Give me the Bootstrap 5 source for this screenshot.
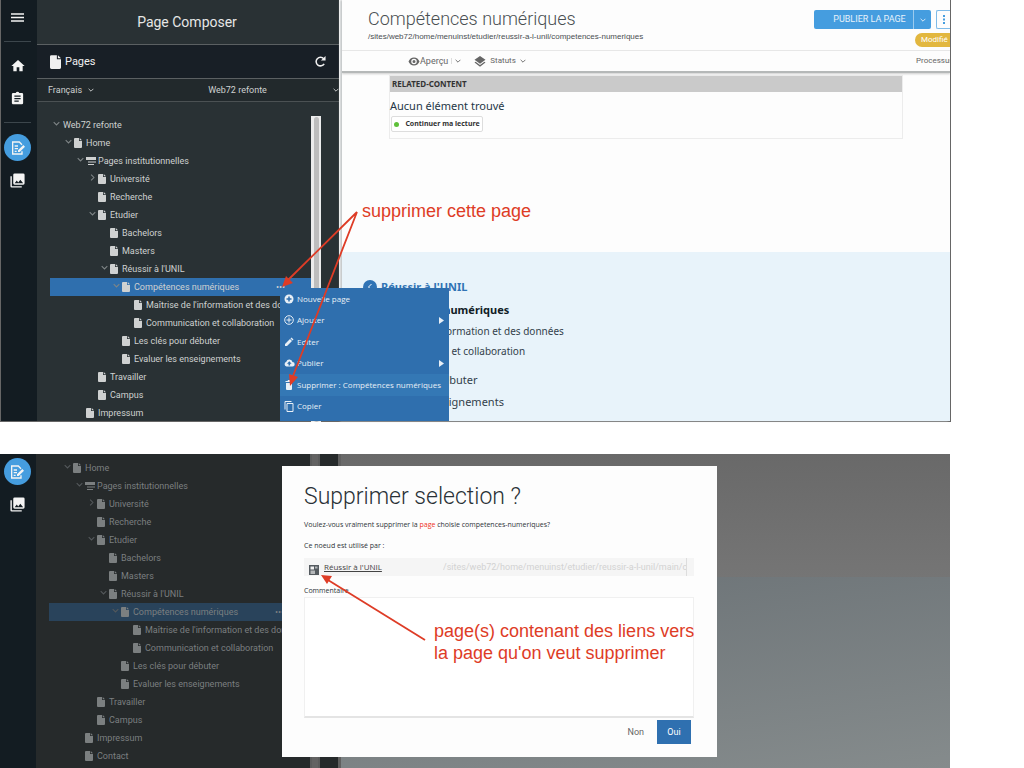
<!DOCTYPE html>
<html lang="fr">
<head>
<meta charset="utf-8">
<meta name="viewport" content="width=device-width, initial-scale=1">
<title>Page Composer</title>
<link href="https://cdn.jsdelivr.net/npm/bootstrap@5.3.0/dist/css/bootstrap.min.css" rel="stylesheet">
<style>
:root{--ui:Roboto,"Open Sans",sans-serif;--doc:"Noto Sans","Open Sans",sans-serif;--red:#de3c26;--blue:#2f6fae}
body{font-family:var(--ui);font-size:9px;line-height:18px;background:#fff;overflow:hidden}
button,input,select,textarea{font:inherit}
svg{display:block;flex:none}
.plain{background:none;border:0;padding:0;color:inherit}
.shot{margin-right:73px}
.shot-a{border:1px solid #666;border-top:0}
.shot-b{margin-top:32px;margin-right:74px;height:314px;overflow:hidden}
.rail{width:36px;background:#131c22;color:#f4f4f4;flex:none;padding-right:3px}
.rail-btn{width:32px;height:32px}
.rail-on{width:27px;height:27px;background:#459ddf}
.rail hr{width:27px;height:1px;border:0;background:#3c464c;opacity:1}
.side{width:302px;background:#293134;color:#cfd1d1;flex:none}
.side-title{height:44px;font-size:14px;color:#e6e6e6;padding-right:2px}
.side-pages{height:35px;font-size:11px;background:#181f26;border:solid #5b6062;border-width:1px 0;color:#f0f0f0;padding:0 13px}
.side-sel{height:23px;background:#22292c;border-bottom:1px solid #4b5153;padding-left:11px}
.side-sel select{appearance:none;background:transparent;border:0;color:inherit;padding:0;outline:0}
.tree{margin:0 0 0 13px;padding:0;list-style:none;width:261px}
.tree li{display:flex;align-items:center;height:18px;white-space:nowrap;overflow:hidden}
.tree .tw{width:9px;color:#7f8587;flex:none;margin-top:-4px}
.tree .ic{width:13px;padding-left:1px;flex:none}
.d0{padding-left:2px}.d1{padding-left:14px}.d2{padding-left:26px}.d3{padding-left:38px}.d4{padding-left:50px}.d5{padding-left:62px}.d6{padding-left:74px}
.tree a{color:inherit;text-decoration:none;flex-grow:1}
.tree .sel{background:var(--blue)}
.dots{width:35px}
.track{width:10px;background:#ececec;padding:1px 2px 0 3px}
.thumb{background:#bdbdbd;border-radius:3px}
.view{margin-left:3px;background:#fdfdfd;box-shadow:-2px 0 2px #c6c9ca;overflow:hidden;min-width:0}
.view-head{height:51px;padding:8px 0 0 26px;border-bottom:1px solid #e9e9e9;color:#4a4f52}
.view-head h1{font-size:18px;font-weight:300;line-height:22px;margin:0}
.view-head p{font:8px/14px "Liberation Sans",sans-serif;margin:0}
.publish{height:19px;width:117px;background:#459ddf;color:#e6f2fb;border-radius:2px;margin-top:2px}
.publish button{height:19px;line-height:19px}
.publish .publish-main{width:99px;padding-left:12px}
.publish .publish-more{width:18px;border-left:1px solid #9ccbee}
.view-head .more{width:14px;height:19px;border:1px solid #7fbbe8;border-right:0;border-radius:2px 0 0 2px;color:#459ddf;margin:2px 0 0 5px}
.state{width:35px;height:14px;line-height:14px;background:#e2b73f;color:#fff;border-radius:7px 0 0 7px;font-size:8px;padding-left:6px;margin-top:4px;overflow:hidden}
.tools{height:22px;padding-left:66px;border-bottom:2px solid #b5b8b8;box-shadow:0 1px 2px #ccc;color:#666}
.split{border-left:1px solid #ddd!important;margin-left:3px;padding-left:3px!important}
.proc{width:34px;overflow:hidden;font-size:8px;white-space:nowrap}
.related{margin:2px 47px 0;border:1px solid #ececec;height:64px;font-family:var(--doc)}
.related h2{font-size:8px;font-weight:700;line-height:16px;background:#cacaca;color:#333;margin:0;padding-left:2px}
.related p{font-size:11px;line-height:14px;margin:7px 0 3px;color:#263746}
.related button{border:1px solid #ddd;background:#fff;border-radius:2px;width:92px;height:16px;font-size:7px;line-height:12px;font-weight:700;color:#333;margin-left:1px}
.led{width:5px;height:5px;background:#5fc03a;margin-right:6px}
.lake{margin-top:113px;height:169px;background:#e8f3fa;padding:28px 0 0 24px;font-family:var(--doc);font-size:11px;line-height:22px;color:#333f4a}
.lake a{color:inherit;text-decoration:none;display:block}
.lake .top-link{color:#2f73b5;font-weight:700;line-height:14px;margin-left:-3px}
.lake .here{color:#111c26;font-weight:700;margin-top:5px}
.lake .sub{font-size:10px;line-height:20px;padding-left:8px}
.ctx{left:279px;top:288px;width:169px;height:133px;background:var(--blue);color:#e8eff6;padding-bottom:4px;font-family:"Open Sans",sans-serif;font-size:8px;z-index:2}
.ctx button{flex:1 1 0;text-align:left;padding:0 5px 0 4px;min-height:0}
.ctx .hot{background:#3478b5}
.notes{left:0;top:0;z-index:3;pointer-events:none}
.note{font:18px/22px "Liberation Sans",sans-serif;color:var(--red);z-index:3;white-space:nowrap}
.note-a{left:361px;top:200px}
.note-b{left:434px;top:166px}
.dim{background:#262a2b;color:#7b7f80}
.dim .sel{background:#29435b}
.dim .tw{color:#54595b}
.dim .track{background:#5a5b5b;padding:0 2px}
.dim .thumb{background:#626262;border-radius:0}
.dim-view{background:#5f5f5f;padding-left:3px}
.dim-top{height:123px;background:linear-gradient(to bottom,#696969,#757575)}
.dim-low{height:191px;background:linear-gradient(172deg,#6b7276,#858b8c)}
.dlg{left:282px;top:12px;width:435px;height:291px;background:#fdfdfd;padding:16px 23px 0 22px;font-family:"Open Sans",sans-serif;font-size:7px;line-height:12px;color:#2d3338;z-index:2}
.dlg h2{font:300 23px/30px var(--ui);margin:0 0 7px;color:#293136}
.dlg p{margin:0 0 9px}
.dlg .used{height:18px;background:#f5f5f5;padding-left:4px;margin-top:-3px;margin-bottom:9px}
.used a{color:#444;width:119px;font-size:8px;margin-left:5px;line-height:18px}
.used input{width:244px;height:18px;border:0;border-right:1px solid #ddd;background:transparent;color:#d2d2d2;font:9px/18px var(--ui);padding:0}
.dlg textarea{height:121px;border:1px solid #f0f0f0;border-bottom:2px solid #e4e4e4;background:#fff;resize:none;outline:0;display:block}
.dlg-foot{gap:13px;padding:2px 3px 0 0;font-size:9px;font-family:var(--ui)}
.dlg .yes{width:34px;height:24px;background:#2f70b0;color:#fff}
</style>
</head>
<body>
<svg width="0" height="0" class="position-absolute" aria-hidden="true">
<symbol id="file" viewBox="0 0 16 20"><path fill="currentColor" d="M2 0h8v6h6v12a2 2 0 0 1-2 2H2a2 2 0 0 1-2-2V2a2 2 0 0 1 2-2zm9.500 0L16 4.500h-4.500z"/></symbol>
<symbol id="down" viewBox="0 0 10 10"><path fill="none" stroke="currentColor" stroke-width="1.500" d="M1 3l4 4 4-4"/></symbol>
<symbol id="right" viewBox="0 0 10 10"><path fill="none" stroke="currentColor" stroke-width="1.500" d="M3 1l4 4-4 4"/></symbol>
<symbol id="bars" viewBox="0 0 10 10"><path fill="currentColor" d="M0 1h10v3H0zM2 5.500h8v1H2zM2 8h6v1H2z"/></symbol>
<symbol id="compose" viewBox="0 0 24 24"><path fill="none" stroke="currentColor" stroke-width="2" d="M18 7l-4-4H4v18h14v-4M7 9h5M7 13h5M7 17h3"/><path fill="currentColor" d="M12 15.500l8-8 2.500 2.500-8 8H12z"/></symbol>
<symbol id="images" viewBox="0 0 24 24"><path fill="currentColor" d="M22 16V4a2 2 0 0 0-2-2H8a2 2 0 0 0-2 2v12a2 2 0 0 0 2 2h12a2 2 0 0 0 2-2zm-11-4l2 2.700 3-3.700 4 5H8zM2 6v14a2 2 0 0 0 2 2h14v-2H4V6z"/></symbol>
</svg>

<section class="shot shot-a position-relative d-flex">
  <nav class="rail d-flex flex-column align-items-center">
    <button class="plain rail-btn d-flex align-items-center justify-content-center" style="height:34px" aria-label="Menu"><svg width="13" height="9"><path stroke="currentColor" stroke-width="1.500" d="M0 1h13M0 4.500h13M0 8h13"/></svg></button>
    <hr style="margin:7px 0 8px">
    <button class="plain rail-btn d-flex align-items-center justify-content-center" aria-label="Accueil"><svg width="16" height="16" viewBox="0 0 24 24"><path fill="currentColor" d="M10 20v-6h4v6h5v-8h3L12 3 2 12h3v8z"/></svg></button>
    <button class="plain rail-btn d-flex align-items-center justify-content-center" aria-label="Tâches"><svg width="15" height="15" viewBox="0 0 24 24"><path fill="currentColor" d="M19 3h-4.200a3 3 0 0 0-5.600 0H5a2 2 0 0 0-2 2v14c0 1 .9 2 2 2h14a2 2 0 0 0 2-2V5a2 2 0 0 0-2-2zm-5 14H7v-2h7zm3-4H7v-2h10zm0-4H7V7h10z"/></svg></button>
    <hr style="margin:8px 0 11px">
    <button class="plain rail-on rounded-circle d-flex align-items-center justify-content-center" aria-label="Page Composer"><svg width="16" height="16"><use href="#compose"/></svg></button>
    <button class="plain rail-btn d-flex align-items-center justify-content-center mt-1" style="height:30px" aria-label="Médias"><svg width="17" height="17"><use href="#images"/></svg></button>
  </nav>

  <aside class="side">
    <div class="side-title d-flex align-items-center justify-content-center">Page Composer</div>
    <div class="side-pages d-flex align-items-center"><svg width="11" height="14" class="me-1"><use href="#file"/></svg><span class="flex-grow-1">Pages</span>
      <button class="plain" aria-label="Actualiser"><svg width="11" height="11" viewBox="0 0 12 12"><path fill="none" stroke="currentColor" stroke-width="1.700" d="M10 8.500A4.700 4.700 0 1 1 9.500 3"/><path fill="currentColor" d="M11.500 0v5h-5z"/></svg></button></div>
    <div class="side-sel d-flex align-items-center">
      <select aria-label="Langue" style="width:40px"><option>Français</option></select><svg width="6" height="6"><use href="#down"/></svg>
      <select aria-label="Site" class="text-center flex-grow-1 ps-5"><option>Web72 refonte</option></select><svg width="6" height="6"><use href="#down"/></svg>
    </div>
    <div class="d-flex" style="padding-top:14px;margin-bottom:-1px">
      <ul class="tree">
        <li class="d0"><svg class="tw" height="7"><use href="#down"/></svg><a href="#" style="padding-left:2px">Web72 refonte</a></li>
        <li class="d1"><svg class="tw" height="7"><use href="#down"/></svg><span class="ic"><svg width="8" height="10"><use href="#file"/></svg></span><a href="#">Home</a></li>
        <li class="d2"><svg class="tw" height="7"><use href="#down"/></svg><span class="ic"><svg width="10" height="10"><use href="#bars"/></svg></span><a href="#">Pages institutionnelles</a></li>
        <li class="d3"><svg class="tw" height="7"><use href="#right"/></svg><span class="ic"><svg width="8" height="10"><use href="#file"/></svg></span><a href="#">Université</a></li>
        <li class="d3"><span class="tw"></span><span class="ic"><svg width="8" height="10"><use href="#file"/></svg></span><a href="#">Recherche</a></li>
        <li class="d3"><svg class="tw" height="7"><use href="#down"/></svg><span class="ic"><svg width="8" height="10"><use href="#file"/></svg></span><a href="#">Etudier</a></li>
        <li class="d4"><span class="tw"></span><span class="ic"><svg width="8" height="10"><use href="#file"/></svg></span><a href="#">Bachelors</a></li>
        <li class="d4"><span class="tw"></span><span class="ic"><svg width="8" height="10"><use href="#file"/></svg></span><a href="#">Masters</a></li>
        <li class="d4"><svg class="tw" height="7"><use href="#down"/></svg><span class="ic"><svg width="8" height="10"><use href="#file"/></svg></span><a href="#">Réussir à l'UNIL</a></li>
        <li class="d5 sel"><svg class="tw" height="7"><use href="#down"/></svg><span class="ic"><svg width="8" height="10"><use href="#file"/></svg></span><a href="#">Compétences numériques</a><button class="plain dots text-start" aria-label="Actions">•••</button></li>
        <li class="d6"><span class="tw"></span><span class="ic"><svg width="8" height="10"><use href="#file"/></svg></span><a href="#">Maîtrise de l'information et des données</a></li>
        <li class="d6"><span class="tw"></span><span class="ic"><svg width="8" height="10"><use href="#file"/></svg></span><a href="#">Communication et collaboration</a></li>
        <li class="d5"><span class="tw"></span><span class="ic"><svg width="8" height="10"><use href="#file"/></svg></span><a href="#">Les clés pour débuter</a></li>
        <li class="d5"><span class="tw"></span><span class="ic"><svg width="8" height="10"><use href="#file"/></svg></span><a href="#">Evaluer les enseignements</a></li>
        <li class="d3"><span class="tw"></span><span class="ic"><svg width="8" height="10"><use href="#file"/></svg></span><a href="#">Travailler</a></li>
        <li class="d3"><span class="tw"></span><span class="ic"><svg width="8" height="10"><use href="#file"/></svg></span><a href="#">Campus</a></li>
        <li class="d2"><span class="tw"></span><span class="ic"><svg width="8" height="10"><use href="#file"/></svg></span><a href="#">Impressum</a></li>
      </ul>
      <div class="track"><div class="thumb h-100"></div></div>
    </div>
  </aside>

  <main class="view flex-grow-1">
    <header class="view-head d-flex justify-content-between">
      <div><h1>Compétences numériques</h1><p>/sites/web72/home/menuinst/etudier/reussir-a-l-unil/competences-numeriques</p></div>
      <div class="d-flex flex-column align-items-end">
        <div class="d-flex">
          <div class="publish d-flex"><button class="plain publish-main">PUBLIER LA PAGE</button><button class="plain publish-more d-flex align-items-center justify-content-center" aria-label="Options"><svg width="6" height="6"><use href="#down"/></svg></button></div>
          <button class="plain more d-flex align-items-center justify-content-center" aria-label="Plus"><svg width="2" height="9"><path fill="currentColor" d="M0 0h2v2H0zM0 3.500h2v2H0zM0 7h2v2H0z"/></svg></button>
        </div>
        <span class="state">Modifié</span>
      </div>
    </header>
    <div class="tools d-flex align-items-center position-relative">
      <button class="plain d-flex align-items-center"><svg width="12" height="9" viewBox="0 0 24 16"><path fill="currentColor" fill-rule="evenodd" d="M12 0C7 0 2.700 3.300 1 8c1.700 4.700 6 8 11 8s9.300-3.300 11-8c-1.700-4.700-6-8-11-8zm0 13.500a5.500 5.500 0 1 1 0-11 5.500 5.500 0 0 1 0 11zm0-2.500a3 3 0 1 0 0-6 3 3 0 0 0 0 6z"/></svg>Aperçu</button>
      <button class="plain split" aria-label="Choisir l'aperçu"><svg width="6" height="6"><use href="#down"/></svg></button>
      <button class="plain d-flex align-items-center" style="margin-left:13px"><svg width="12" height="11" viewBox="0 0 20 20"><path fill="currentColor" d="M10 0l10 7-10 7L0 7zM2 10.500l8 5.700 8-5.700 2 1.500-10 7.500L0 12z"/></svg><span class="mx-1" style="font-size:8px">Statuts</span><svg width="6" height="6"><use href="#down"/></svg></button>
      <span class="proc ms-auto">Processus</span>
    </div>
    <article class="related">
      <h2>RELATED-CONTENT</h2>
      <p>Aucun élément trouvé</p>
      <button class="d-flex align-items-center justify-content-center p-0"><span class="led rounded-circle"></span>Continuer ma lecture</button>
    </article>
    <nav class="lake">
      <a href="#" class="top-link d-flex align-items-center"><svg width="14" height="14" class="me-1"><circle cx="7" cy="7" r="7" fill="#2f73b5"/><path fill="none" stroke="#fff" d="M8.500 4L5.500 7l3 3"/></svg>Réussir à l'UNIL</a>
      <a href="#" class="here">Compétences numériques</a>
      <a href="#" class="sub">Maîtrise de l'information et des données</a>
      <a href="#" class="sub">Communication et collaboration</a>
      <a href="#" style="margin-top:8px">Les clés pour débuter</a>
      <a href="#">Evaluer les enseignements</a>
    </nav>
  </main>

  <div class="ctx position-absolute d-flex flex-column">
    <button class="plain d-flex align-items-center"><svg width="13" height="10"><circle cx="5" cy="5" r="4.500" fill="currentColor"/><path stroke="#2f6fae" stroke-width="1.500" d="M5 2.500v5M2.500 5h5"/></svg>Nouvelle page</button>
    <button class="plain d-flex align-items-center"><svg width="13" height="10"><circle cx="5" cy="5" r="4.300" fill="none" stroke="currentColor"/><path stroke="currentColor" d="M5 2.500v5M2.500 5h5"/></svg><span class="flex-grow-1">Ajouter</span><svg width="5" height="7"><path fill="currentColor" d="M0 0l5 3.500L0 7z"/></svg></button>
    <button class="plain d-flex align-items-center"><svg width="13" height="10"><path fill="currentColor" d="M1 7l5-5 2 2-5 5H1zM6.500 1.500l1-1 2 2-1 1z"/></svg>Editer</button>
    <button class="plain d-flex align-items-center"><svg width="13" height="10" viewBox="0 0 13 10"><path fill="currentColor" fill-rule="evenodd" d="M2.500 8.500a2.500 2.500 0 0 1-.2-4.800 3.200 3.200 0 0 1 6.200.4 2.200 2.200 0 0 1 0 4.400zM5.300 3.300L3 5.700h1.500v1.700h1.600V5.700h1.500z"/></svg><span class="flex-grow-1">Publier</span><svg width="5" height="7"><path fill="currentColor" d="M0 0l5 3.500L0 7z"/></svg></button>
    <button class="plain hot d-flex align-items-center text-nowrap"><svg width="13" height="10"><path fill="currentColor" d="M2 3h6v6a1 1 0 0 1-1 1H3a1 1 0 0 1-1-1zM1.500 1h2l.5-1h2l.5 1h2v1h-7z"/></svg>Supprimer : Compétences numériques</button>
    <button class="plain d-flex align-items-center"><svg width="13" height="11"><path fill="none" stroke="currentColor" d="M3 2.500h6v8H3zM1 8.500v-8h6.500"/></svg>Copier</button>
  </div>
  <svg class="notes position-absolute" width="400" height="400" aria-hidden="true"><g stroke="#de3c26" stroke-width="1.800" fill="#de3c26"><path d="M356 212L287 280M356 212L292 376"/><path stroke="none" d="M281 287l4-11 7 7zM289 386l-1-12 9 3z"/></g></svg>
  <div class="note note-a position-absolute">supprimer cette page</div>
</section>

<section class="shot shot-b position-relative d-flex">
  <nav class="rail d-flex flex-column align-items-center" style="padding-right:2px">
    <button class="plain rail-on rounded-circle d-flex align-items-center justify-content-center" style="margin-top:4px" aria-label="Page Composer"><svg width="16" height="16"><use href="#compose"/></svg></button>
    <button class="plain rail-btn d-flex align-items-center justify-content-center mt-1" style="height:30px" aria-label="Médias"><svg width="17" height="17"><use href="#images"/></svg></button>
  </nav>
  <aside class="side dim d-flex">
    <ul class="tree" style="padding-top:5px">
      <li class="d1"><svg class="tw" height="7"><use href="#down"/></svg><span class="ic"><svg width="8" height="10"><use href="#file"/></svg></span><a href="#">Home</a></li>
      <li class="d2"><svg class="tw" height="7"><use href="#down"/></svg><span class="ic"><svg width="10" height="10"><use href="#bars"/></svg></span><a href="#">Pages institutionnelles</a></li>
      <li class="d3"><svg class="tw" height="7"><use href="#right"/></svg><span class="ic"><svg width="8" height="10"><use href="#file"/></svg></span><a href="#">Université</a></li>
      <li class="d3"><span class="tw"></span><span class="ic"><svg width="8" height="10"><use href="#file"/></svg></span><a href="#">Recherche</a></li>
      <li class="d3"><svg class="tw" height="7"><use href="#down"/></svg><span class="ic"><svg width="8" height="10"><use href="#file"/></svg></span><a href="#">Etudier</a></li>
      <li class="d4"><span class="tw"></span><span class="ic"><svg width="8" height="10"><use href="#file"/></svg></span><a href="#">Bachelors</a></li>
      <li class="d4"><span class="tw"></span><span class="ic"><svg width="8" height="10"><use href="#file"/></svg></span><a href="#">Masters</a></li>
      <li class="d4"><svg class="tw" height="7"><use href="#down"/></svg><span class="ic"><svg width="8" height="10"><use href="#file"/></svg></span><a href="#">Réussir à l'UNIL</a></li>
      <li class="d5 sel"><svg class="tw" height="7"><use href="#down"/></svg><span class="ic"><svg width="8" height="10"><use href="#file"/></svg></span><a href="#">Compétences numériques</a><button class="plain dots text-start" aria-label="Actions">•••</button></li>
      <li class="d6"><span class="tw"></span><span class="ic"><svg width="8" height="10"><use href="#file"/></svg></span><a href="#">Maîtrise de l'information et des données</a></li>
      <li class="d6"><span class="tw"></span><span class="ic"><svg width="8" height="10"><use href="#file"/></svg></span><a href="#">Communication et collaboration</a></li>
      <li class="d5"><span class="tw"></span><span class="ic"><svg width="8" height="10"><use href="#file"/></svg></span><a href="#">Les clés pour débuter</a></li>
      <li class="d5"><span class="tw"></span><span class="ic"><svg width="8" height="10"><use href="#file"/></svg></span><a href="#">Evaluer les enseignements</a></li>
      <li class="d3"><span class="tw"></span><span class="ic"><svg width="8" height="10"><use href="#file"/></svg></span><a href="#">Travailler</a></li>
      <li class="d3"><span class="tw"></span><span class="ic"><svg width="8" height="10"><use href="#file"/></svg></span><a href="#">Campus</a></li>
      <li class="d2"><span class="tw"></span><span class="ic"><svg width="8" height="10"><use href="#file"/></svg></span><a href="#">Impressum</a></li>
      <li class="d2"><span class="tw"></span><span class="ic"><svg width="8" height="10"><use href="#file"/></svg></span><a href="#">Contact</a></li>
    </ul>
    <div class="track"><div class="thumb h-100"></div></div>
  </aside>
  <div class="dim-view flex-grow-1"><div class="dim-top"></div><div class="dim-low"></div></div>

  <form class="dlg position-absolute" role="dialog" aria-labelledby="dlg-title">
    <h2 id="dlg-title">Supprimer selection ?</h2>
    <p>Voulez-vous vraiment supprimer la <span style="color:#ee3124">page</span> choisie competences-numeriques?</p>
    <p>Ce noeud est utilisé par :</p>
    <div class="used d-flex"><svg width="10" height="10" viewBox="0 0 10 10" style="margin:7px 0 0 1px"><path fill="#555b60" d="M0 0h10v10H0z"/><path fill="#f2f2f2" d="M1.500 1.500h3.500v3H1.500z"/><path fill="#b5b8ba" d="M6 1.500h2.500v2H6zM1.500 5.500H6v3.500H1.500z"/></svg><a href="#">Réussir à l'UNIL</a><input type="text" readonly aria-label="Chemin" value="/sites/web72/home/menuinst/etudier/reussir-a-l-unil/main/co"></div>
    <label class="d-block" for="comment">Commentaire</label>
    <textarea id="comment" class="w-100"></textarea>
    <div class="dlg-foot d-flex align-items-center justify-content-end"><button type="button" class="plain" style="color:#666">Non</button><button type="button" class="plain yes">Oui</button></div>
  </form>
  <svg class="notes position-absolute" width="440" height="200" aria-hidden="true"><path stroke="#de3c26" stroke-width="1.800" d="M425 186L328 126"/><path fill="#de3c26" d="M321 121l11 1-5 8z"/></svg>
  <div class="note note-b position-absolute">page(s) contenant des liens vers<br>la page qu'on veut supprimer</div>
</section>
<script src="https://cdn.jsdelivr.net/npm/bootstrap@5.3.0/dist/js/bootstrap.bundle.min.js"></script>
</body>
</html>
